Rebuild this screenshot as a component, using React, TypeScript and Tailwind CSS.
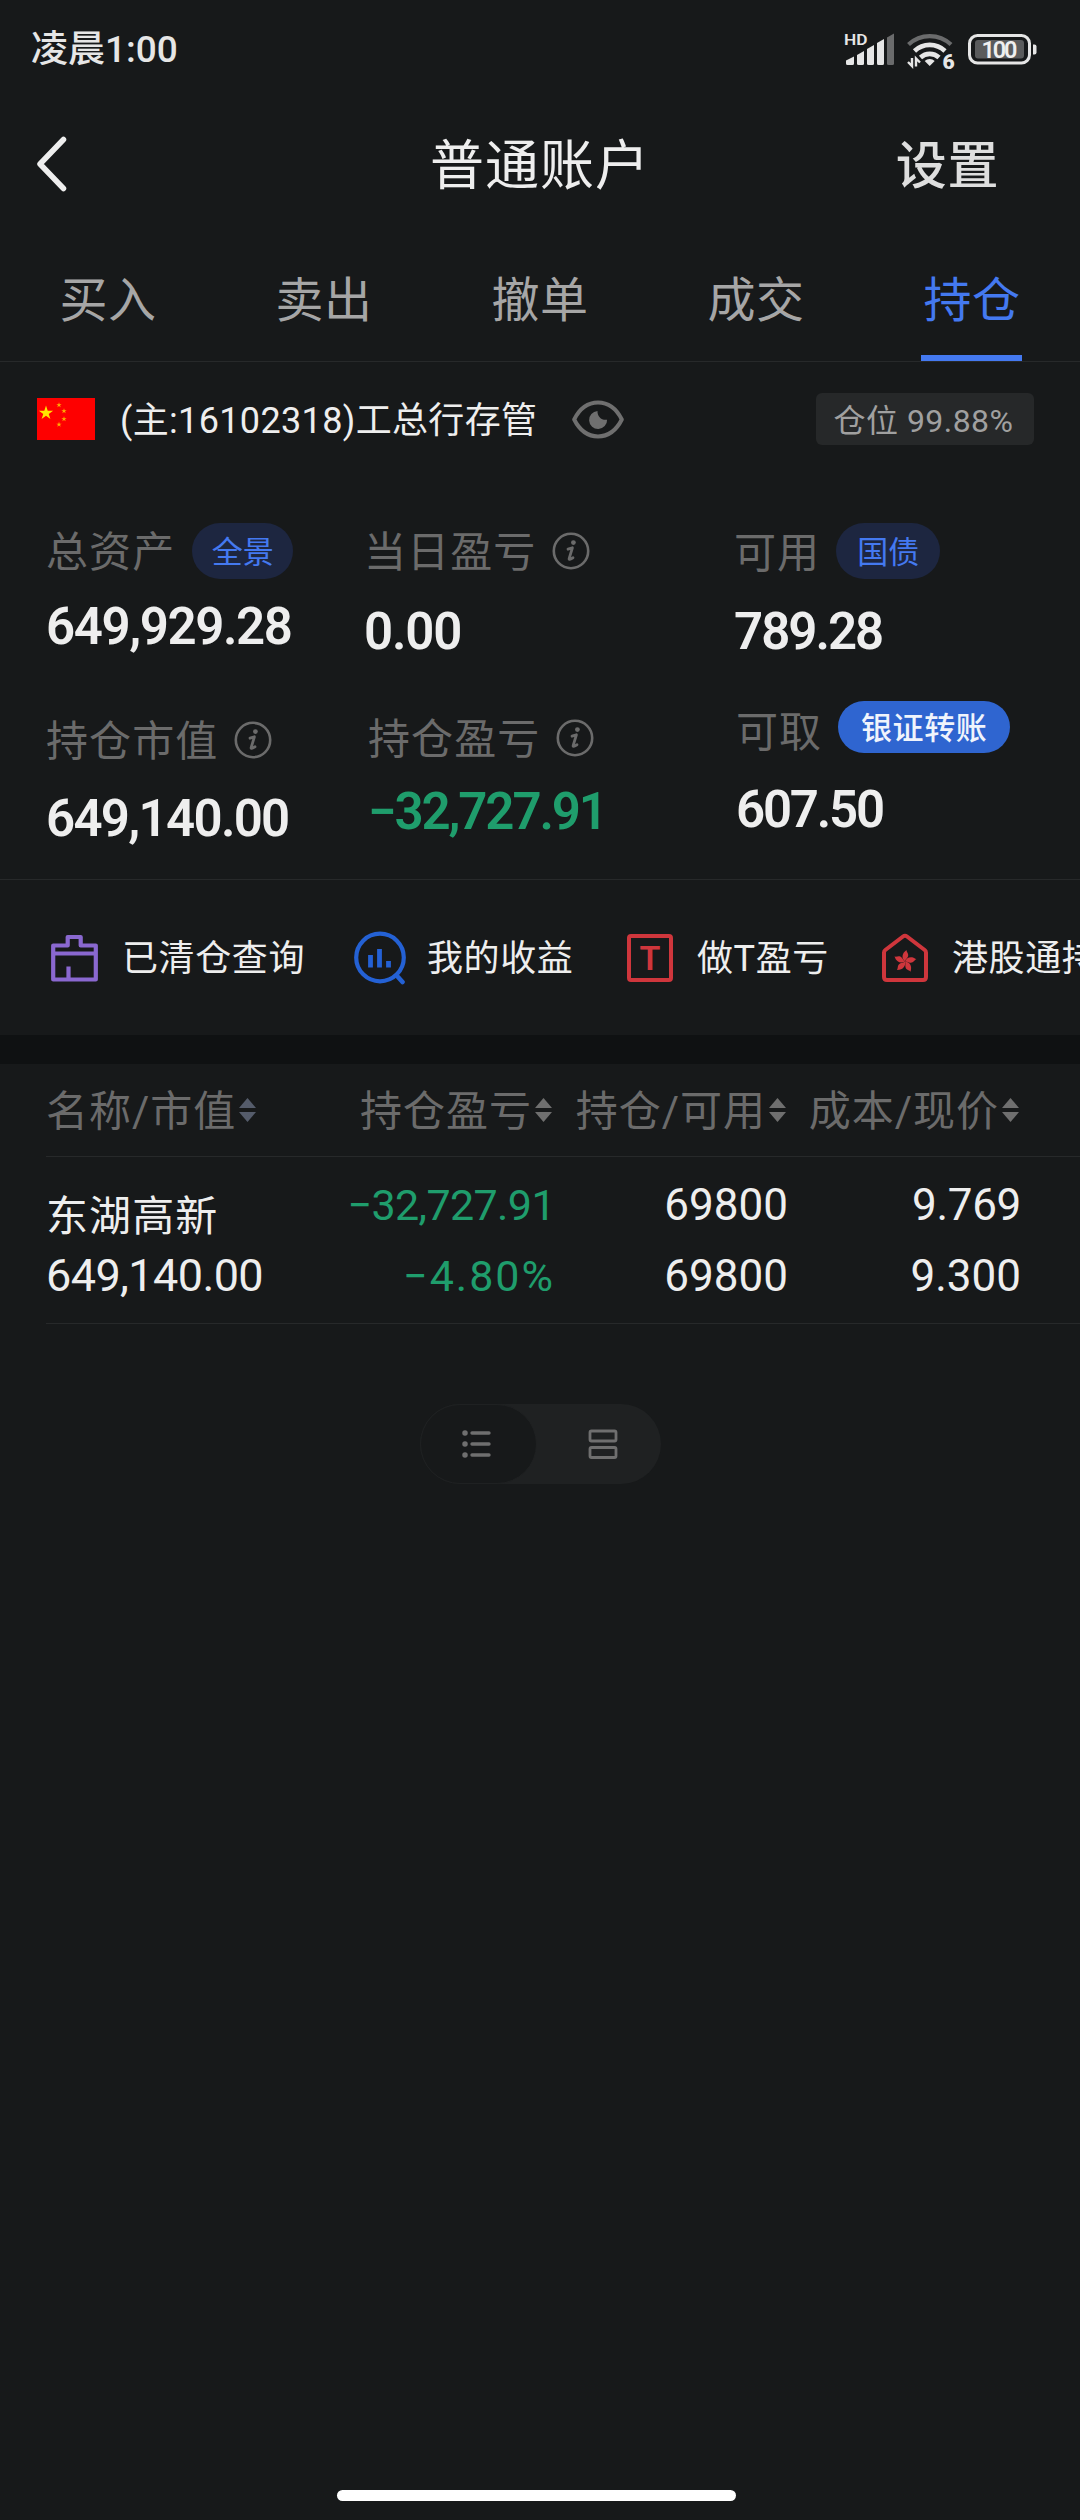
import React from 'react';

interface StatProps {
  label: string;
  value: string;
  className?: string;
  valueClass?: string;
  labelClass?: string;
  children?: React.ReactNode;
}

const Stat: React.FC<StatProps> = ({ label, value, className = '', valueClass = 'tracking-[-1.4px]', labelClass = 'pt-[3px]', children }) => (
  <div className={className}>
    <div className="flex h-14 items-center">
      <span className={`text-[42px] leading-[56px] tracking-[1.1px] text-[#6b6b6b] ${labelClass}`}>{label}</span>
      {children}
    </div>
    <div className={`text-[51px] leading-[52px] font-semibold ${valueClass}`}>{value}</div>
  </div>
);

const InfoIcon = () => (
  <svg className="ml-[16px] size-[38px] text-[#6b6b6b]" viewBox="0 0 38 38" fill="none">
    <circle cx="19" cy="19" r="17.2" stroke="currentColor" strokeWidth="2.6" />
    <circle cx="21.4" cy="10.6" r="2.4" fill="currentColor" />
    <path d="M16 17.2l4.4-1.4-3.2 10.6c-.4 1.4.4 1.4 3.8-.6" stroke="currentColor" strokeWidth="2.8" strokeLinecap="round" strokeLinejoin="round" />
  </svg>
);

const SortIcon = ({ className = 'ml-1 text-[#6f6f6f]' }: { className?: string }) => (
  <svg className={`h-[24px] w-[17px] ${className}`} viewBox="0 0 17 24" fill="currentColor">
    <path d="M8.5 0L17 10H0z" />
    <path d="M8.5 24L17 14H0z" />
  </svg>
);

const EyeIcon = () => (
  <svg className="ml-[35px] h-[39px] w-[52px] text-[#6f6f6f]" viewBox="0 0 52 39" fill="none">
    <path
      d="M2.2 19.5C7 10 15 2.6 26 2.6S45 10 49.8 19.5C45 29 37 36.4 26 36.4S7 29 2.2 19.5z"
      stroke="currentColor"
      strokeWidth="4"
      strokeLinejoin="round"
    />
    <path d="M25.5 11a9 9 0 1 0 9.600 8.700c-5.500.8-9.900-3-9.600-8.700z" fill="currentColor" />
  </svg>
);

const star = 'M0-1L.225-.309.951-.309.363.118.588.809 0 .382-.588.809-.363.118-.951-.309-.225-.309z';

const Flag = () => (
  <svg className="h-[42px] w-[58px]" viewBox="0 0 58 42">
    <rect width="58" height="42" fill="#fe0000" />
    <path d={star} transform="translate(9 15) scale(7.5)" fill="#ffe600" />
    <g fill="#ffb000">
      <path d={star} transform="translate(22 7) scale(2.8)" />
      <path d={star} transform="translate(27 13) scale(2.8)" />
      <path d={star} transform="translate(27 21) scale(2.8)" />
      <path d={star} transform="translate(22 26.5) scale(2.8)" />
    </g>
  </svg>
);

const StatusIcons = () => (
  <svg className="h-[50px] w-[200px]" viewBox="840 23 200 50" fill="none">
    <text x="844" y="44" fontSize="15.5" fontWeight="600" fill="#e6e6e6" textLength="23.5" lengthAdjust="spacingAndGlyphs">HD</text>
    <g fill="#e6e6e6">
      <path d="M846 59.5l8-4V62.5a1.5 1.5 0 0 1-1.5 1.5h-5a1.5 1.5 0 0 1-1.5-1.5z" />
      <path d="M857 54l7-4V62.5a1.5 1.5 0 0 1-1.5 1.5h-4a1.5 1.5 0 0 1-1.5-1.5z" />
      <path d="M867 48l7-4V62.5a1.5 1.5 0 0 1-1.5 1.5h-4a1.5 1.5 0 0 1-1.5-1.5z" />
      <path d="M877 42l7-4V62.5a1.5 1.5 0 0 1-1.5 1.5h-4a1.5 1.5 0 0 1-1.5-1.5z" />
    </g>
    <path d="M887 36.5l7-4V62.5a1.5 1.5 0 0 1-1.5 1.5h-4a1.5 1.5 0 0 1-1.5-1.5z" fill="#6a6b6c" />
    <path d="M908.5 43.5a31 31 0 0 1 42.5 0" stroke="#6a6b6c" strokeWidth="4.2" />
    <path d="M914.5 50a22 22 0 0 1 30.5 0" stroke="#e6e6e6" strokeWidth="4.6" />
    <path d="M920.5 56.5a13.5 13.5 0 0 1 18.5 0" stroke="#e6e6e6" strokeWidth="4.6" />
    <path d="M929.7 65l-5-5a7 7 0 0 1 10 0z" fill="#e6e6e6" />
    <path d="M912 57v8l-4-4M916 65.500v-8l4 4" stroke="#e6e6e6" strokeWidth="2.4" />
    <text x="942.5" y="67.5" fontSize="21" fontWeight="900" fill="#e6e6e6">6</text>
    <rect x="969.5" y="34.5" width="60" height="27.5" rx="8" stroke="#e6e6e6" strokeWidth="3" />
    <rect x="975" y="39" width="49" height="18.5" rx="3" fill="#5a5b5c" />
    <path d="M1033 43.5h1.5a2 2 0 0 1 2 2v6a2 2 0 0 1-2 2h-1.5z" fill="#e6e6e6" />
    <text x="999.5" y="56.5" fontSize="23.5" fontWeight="600" fill="#efefef" textAnchor="middle" textLength="36">100</text>
  </svg>
);

const ClearedIcon = () => (
  <svg className="h-[48px] w-[47px]" viewBox="0 0 47 48" fill="none" stroke="#8a68d0" strokeWidth="4.2" strokeLinejoin="round">
    <path d="M2.2 45.5V11.500h14.500V3h13v8.500H44.800V45.500z" />
    <path d="M2 19.5h43M17.5 46V32.5" />
  </svg>
);

const ProfitIcon = () => (
  <svg className="h-[54px] w-[53px]" viewBox="0 0 53 54" fill="none" stroke="#2461d4" strokeWidth="4.2">
    <circle cx="26" cy="26.5" r="23.8" />
    <path d="M44 46l4.5 5" strokeWidth="4.6" strokeLinecap="round" />
    <path d="M16.5 24v12.5M25.5 18v18.5M34.5 30v6.5" strokeWidth="4.8" />
  </svg>
);

const TradeTIcon = () => (
  <span className="flex h-[48px] w-[46px] items-center justify-center rounded-[4px] border-4 border-[#cf363c] text-[34px] leading-none font-semibold tracking-normal text-[#cf363c]">
    T
  </span>
);

const HkIcon = () => (
  <svg className="h-[50px] w-[48px]" viewBox="0 0 48 50" fill="none">
    <path d="M3 19.5Q3 18 4.3 17L22 3.5Q24 2 26 3.5L43.7 17Q45 18 45 19.5V44Q45 47 42 47H6Q3 47 3 44z" stroke="#cf363c" strokeWidth="4" />
    <g fill="#cf363c" transform="translate(24 28.5)">
      {[0, 72, 144, 216, 288].map((r) => (
        <path key={r} d="M0 0C-3.500-3-3.500-8 1.500-11.500 1.500-9 4.500-7.500 2.600-4.200 2-3 .5-2 0 0z" transform={`rotate(${r})`} />
      ))}
    </g>
  </svg>
);

const tabs = ['买入', '卖出', '撤单', '成交', '持仓'];

const App: React.FC = () => {
  return (
    <div className="flex h-[2520px] w-[1080px] flex-col overflow-hidden bg-[#17191a] font-[Roboto,'Noto_Sans_CJK_SC',sans-serif] text-[#eeeeee]">
      <div className="flex h-[98px] shrink-0 items-center justify-between pr-10 pl-[31px]">
        <span className="text-[37px] leading-none font-medium text-[#e6e6e6]">凌晨1:00</span>
        <StatusIcons />
      </div>

      <header className="grid h-[134px] shrink-0 grid-cols-3 items-center">
        <svg className="-mt-[2px] ml-[36px] h-[56px] w-[32px]" viewBox="0 0 32 56" fill="none">
          <path d="M27.5 3.5L4 28l23.5 24.5" stroke="#eeeeee" strokeWidth="5.5" strokeLinecap="round" strokeLinejoin="round" />
        </svg>
        <h1 className="pt-[3px] text-center text-[54px] leading-none tracking-[1px] whitespace-nowrap">普通账户</h1>
        <span className="pt-[3px] pr-[81px] text-right text-[51px] leading-none font-medium tracking-[0.6px] text-[#dedede]">设置</span>
      </header>

      <nav className="flex h-[130px] shrink-0 border-b border-[#27292a]">
        {tabs.map((t) => (
          <div key={t} className="flex flex-1 flex-col items-center justify-between pt-[45px]">
            <span className={`text-[48px] leading-none tracking-[0.6px] ${t === '持仓' ? 'text-[#4479f0]' : 'text-[#a6a6a6]'}`}>{t}</span>
            {t === '持仓' && <span className="mr-px h-[6px] w-[101px] bg-[#4479f0]" />}
          </div>
        ))}
      </nav>

      <div className="flex h-[114px] shrink-0 items-center pr-[46px] pl-[37px]">
        <Flag />
        <span className="ml-[25px] pt-[3px] text-[36px] leading-none tracking-[0.35px] whitespace-nowrap">(主:16102318)工总行存管</span>
        <EyeIcon />
        <span className="ml-auto flex h-[52px] w-[218px] items-center justify-center rounded-md bg-[#262829] pt-[4px] pr-[3px] text-[32px] leading-none tracking-[0.45px] whitespace-nowrap text-[#a0a0a0]">
          仓位 99.88%
        </span>
      </div>

      <section className="flex h-[404px] shrink-0 border-b border-[#27292a] pt-[47px] pl-[46px]">
        <div className="w-[318px]">
          <Stat label="总资产" value="649,929.28" labelClass="pt-[4px]" valueClass="mt-[22px] tracking-[-1.4px]">
            <span className="ml-[17px] flex h-14 w-[101px] items-center justify-center rounded-full bg-[#1d2640] pt-[2px] text-[31px] leading-none text-[#4479f0]">全景</span>
          </Stat>
          <Stat label="持仓市值" value="649,140.00" className="mt-[59px]" valueClass="mt-[25px] tracking-[-1.7px]">
            <InfoIcon />
          </Stat>
        </div>
        <div className="w-[370px]">
          <Stat label="当日盈亏" value="0.00" labelClass="pt-[4px]" valueClass="mt-[27px] tracking-[-1.2px]">
            <InfoIcon />
          </Stat>
          <Stat label="持仓盈亏" value="−32,727.91" className="mt-[52px] pl-[4px]" valueClass="mt-[20px] tracking-[-2.1px] text-[#1f9d6c]">
            <InfoIcon />
          </Stat>
        </div>
        <div>
          <Stat label="可用" value="789.28" labelClass="pt-[5px]" valueClass="mt-[27px] tracking-[-2px]">
            <span className="ml-[16px] flex h-14 w-[104px] items-center justify-center rounded-full bg-[#1d2640] pt-[2px] text-[31px] leading-none text-[#4479f0]">国债</span>
          </Stat>
          <Stat label="可取" value="607.50" className="mt-[41px] pl-[2px]" labelClass="pt-[11px]" valueClass="mt-[29px] tracking-[-2.2px]">
            <span className="ml-[16px] flex h-[52px] w-[172px] items-center justify-center rounded-full bg-[#2f65d0] pt-[2px] text-[31px] leading-none font-medium tracking-[0.6px] text-[#f0f4fc]">银证转账</span>
          </Stat>
        </div>
      </section>

      <div className="flex h-[155px] shrink-0 items-center overflow-hidden pl-[51px] text-[36px] leading-none tracking-[0.6px] whitespace-nowrap [&>*]:shrink-0">
        <ClearedIcon />
        <span className="ml-[24px] w-[232px] pt-[3px]">已清仓查询</span>
        <ProfitIcon />
        <span className="ml-[20px] w-[200px] pt-[3px]">我的收益</span>
        <TradeTIcon />
        <span className="ml-[24px] w-[184px] pt-[3px]">做T盈亏</span>
        <HkIcon />
        <span className="ml-[23px] pt-[3px]">港股通持仓</span>
      </div>

      <div className="h-[29px] shrink-0 bg-[#0f1112]" />

      <div className="grid h-[92px] shrink-0 grid-cols-[273px_233px_234px_233px] items-center pl-[46px] text-[42px] leading-[48px] tracking-[1px] whitespace-nowrap text-[#6b6b6b]">
        <div className="flex items-center"><span className="pt-[3px]">名称/市值</span><SortIcon className="ml-[3px] text-[#555c6b]" /></div>
        <div className="flex items-center justify-end"><span className="pt-[3px]">持仓盈亏</span><SortIcon className="ml-[3px] text-[#6f6f6f]" /></div>
        <div className="flex items-center justify-end"><span className="pt-[3px]">持仓/可用</span><SortIcon className="ml-[3px] text-[#6f6f6f]" /></div>
        <div className="flex items-center justify-end"><span className="pt-[3px]">成本/现价</span><SortIcon className="ml-[3px] text-[#6f6f6f]" /></div>
      </div>

      <div className="ml-[46px] grid h-[168px] shrink-0 grid-cols-[273px_236px_233px_233px] border-y border-[#27292a] text-right text-[44px] leading-[56px]">
        <div className="pt-[32px] text-left">
          <div className="text-[42px] tracking-[1.1px]">东湖高新</div>
          <div className="mt-[3px] text-[45px] tracking-[-0.6px]">649,140.00</div>
        </div>
        <div className="pt-[20px] text-[43px] text-[#1f9d6c]">
          <div className="tracking-[-0.6px]">−32,727.91</div>
          <div className="mt-[15px] tracking-[2px]">−4.80%</div>
        </div>
        <div className="pt-[20px]">
          <div>69800</div>
          <div className="mt-[15px]">69800</div>
        </div>
        <div className="pt-[20px]">
          <div className="tracking-[-0.3px]">9.769</div>
          <div className="mt-[15px]">9.300</div>
        </div>
      </div>

      <div className="mx-auto mt-[80px] flex h-[80px] w-[241px] shrink-0 items-center rounded-full bg-[#1f2122]">
        <div className="flex h-full w-[117px] items-center justify-center rounded-full border border-[#1f2122] bg-[#17191a]">
          <svg className="mr-[5px] size-[30px]" viewBox="0 0 30 30" stroke="#6f6f6f" strokeLinecap="round">
            <path d="M4 4h.01M4 15h.01M4 26h.01" strokeWidth="5.5" />
            <path d="M11 4h17M11 15h17M11 26h17" strokeWidth="3.4" />
          </svg>
        </div>
        <div className="flex flex-1 justify-center">
          <svg className="ml-[9px] size-[30px]" viewBox="0 0 30 30" fill="none" stroke="#6f6f6f" strokeWidth="2.8">
            <rect x="2" y="2" width="26" height="10" rx="1.5" />
            <rect x="2" y="18.5" width="26" height="10" rx="1.5" />
          </svg>
        </div>
      </div>

      <div className="mt-auto mb-[19px] ml-[337px] h-[11px] w-[399px] shrink-0 rounded-full bg-white" />
    </div>
  );
};

export default App;
